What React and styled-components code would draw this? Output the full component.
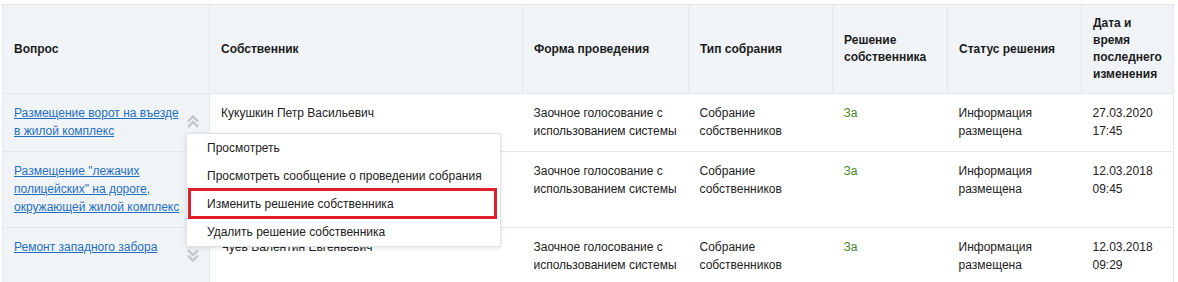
import React from 'react';
import styled, { createGlobalStyle } from 'styled-components';

const GlobalStyle = createGlobalStyle`
  body {
    margin: 0;
    background: #fff;
    font-family: 'Liberation Sans', Arial, sans-serif;
    color: #222;
  }
`;

const columns = [
  { title: 'Вопрос', width: 207 },
  { title: 'Собственник', width: 313 },
  { title: 'Форма проведения', width: 166 },
  { title: 'Тип собрания', width: 144 },
  { title: 'Решение собственника', width: 115 },
  { title: 'Статус решения', width: 134 },
  { title: 'Дата и время последнего изменения', width: 92 },
];

const rows = [
  {
    question: 'Размещение ворот на въезде в\u00a0жилой комплекс',
    owner: 'Кукушкин Петр Васильевич',
    date: '27.03.2020',
    time: '17:45',
    open: true,
  },
  {
    question: 'Размещение "лежачих полицейских" на дороге, окружающей жилой комплекс',
    owner: 'Кукушкин Петр Васильевич',
    date: '12.03.2018',
    time: '09:45',
  },
  {
    question: 'Ремонт западного забора',
    owner: 'Чуев Валентин Евгеньевич',
    date: '12.03.2018',
    time: '09:29',
  },
];

const menuItems = [
  { label: 'Просмотреть' },
  { label: 'Просмотреть сообщение о проведении собрания' },
  { label: 'Изменить решение собственника', marked: true },
  { label: 'Удалить решение собственника' },
];

const Page = styled.div`
  padding: 4px 0 0 2px;
`;

const TableWrap = styled.div`
  position: relative;
  width: 1171px;
`;

const Table = styled.table`
  width: 1171px;
  table-layout: fixed;
  border-collapse: collapse;
  border: 1px solid #e3e7eb;
  font-size: 12px;
`;

const Th = styled.th`
  box-sizing: border-box;
  width: ${(p) => p.$width}px;
  background: #f1f4f7;
  border: 1px solid #e3e7eb;
  padding: 10px 10px 10px 11px;
  height: 89px;
  line-height: 17px;
  text-align: left;
  vertical-align: middle;
  font-weight: bold;
  color: #1c1c1c;
`;

const Td = styled.td`
  box-sizing: border-box;
  padding: 10px 10px 11px 11px;
  line-height: 18px;
  vertical-align: top;
  border-bottom: 1px solid #e3e7eb;
  background: ${(p) => (p.$shaded ? '#f1f4f7' : '#fff')};
  border-right: ${(p) => (p.$shaded ? '1px solid #e3e7eb' : 'none')};
`;

const QuestionCell = styled.div`
  display: flex;
  align-items: flex-start;
  gap: 6px;
`;

const QuestionLink = styled.a`
  flex: 1;
  color: #1f70c4;
  text-decoration: underline;
  cursor: pointer;
`;

const Toggle = styled.svg`
  flex: none;
  width: 12px;
  height: 13px;
  margin-top: 11px;
`;

const Decision = styled.span`
  color: #3f8a24;
`;

const Menu = styled.ul`
  position: absolute;
  left: 184px;
  top: 129px;
  width: 313px;
  margin: 0;
  padding: 0;
  list-style: none;
  background: #fff;
  border: 1px solid #dfe2e6;
  box-shadow: 0 1px 4px rgba(0, 0, 0, 0.12);
  font-size: 12px;
  z-index: 5;
`;

const MenuItem = styled.li`
  position: relative;
  height: 28px;
  line-height: 28px;
  padding: 0 0 0 20px;
  color: #222;
  white-space: nowrap;

  &::after {
    content: '';
    display: ${(p) => (p.$marked ? 'block' : 'none')};
    position: absolute;
    top: -2px;
    bottom: -1px;
    left: 1px;
    right: 3px;
    border: 3px solid #e31e2b;
  }
`;

const Chevrons = ({ up }) => (
  <Toggle viewBox="0 0 12 13" fill="none" stroke="#c4c8cd" strokeWidth="2.4">
    {up ? (
      <>
        <polyline points="1,6.5 6,1.5 11,6.5" />
        <polyline points="1,12 6,7 11,12" />
      </>
    ) : (
      <>
        <polyline points="1,1 6,6 11,1" />
        <polyline points="1,6.5 6,11.5 11,6.5" />
      </>
    )}
  </Toggle>
);

const App = () => {
  return (
    <Page>
      <GlobalStyle />
      <TableWrap>
        <Table>
          <thead>
            <tr>
              {columns.map((c) => (
                <Th key={c.title} $width={c.width}>
                  {c.title}
                </Th>
              ))}
            </tr>
          </thead>
          <tbody>
            {rows.map((r, i) => (
              <tr key={i}>
                <Td $shaded>
                  <QuestionCell>
                    <QuestionLink>{r.question}</QuestionLink>
                    <Chevrons up={r.open} />
                  </QuestionCell>
                </Td>
                <Td>{r.owner}</Td>
                <Td>Заочное голосование с использованием системы</Td>
                <Td>Собрание собственников</Td>
                <Td>
                  <Decision>За</Decision>
                </Td>
                <Td>Информация размещена</Td>
                <Td>
                  {r.date}
                  <br />
                  {r.time}
                </Td>
              </tr>
            ))}
          </tbody>
        </Table>
        <Menu>
          {menuItems.map((m) => (
            <MenuItem key={m.label} $marked={m.marked}>
              {m.label}
            </MenuItem>
          ))}
        </Menu>
      </TableWrap>
    </Page>
  );
};

export default App;
